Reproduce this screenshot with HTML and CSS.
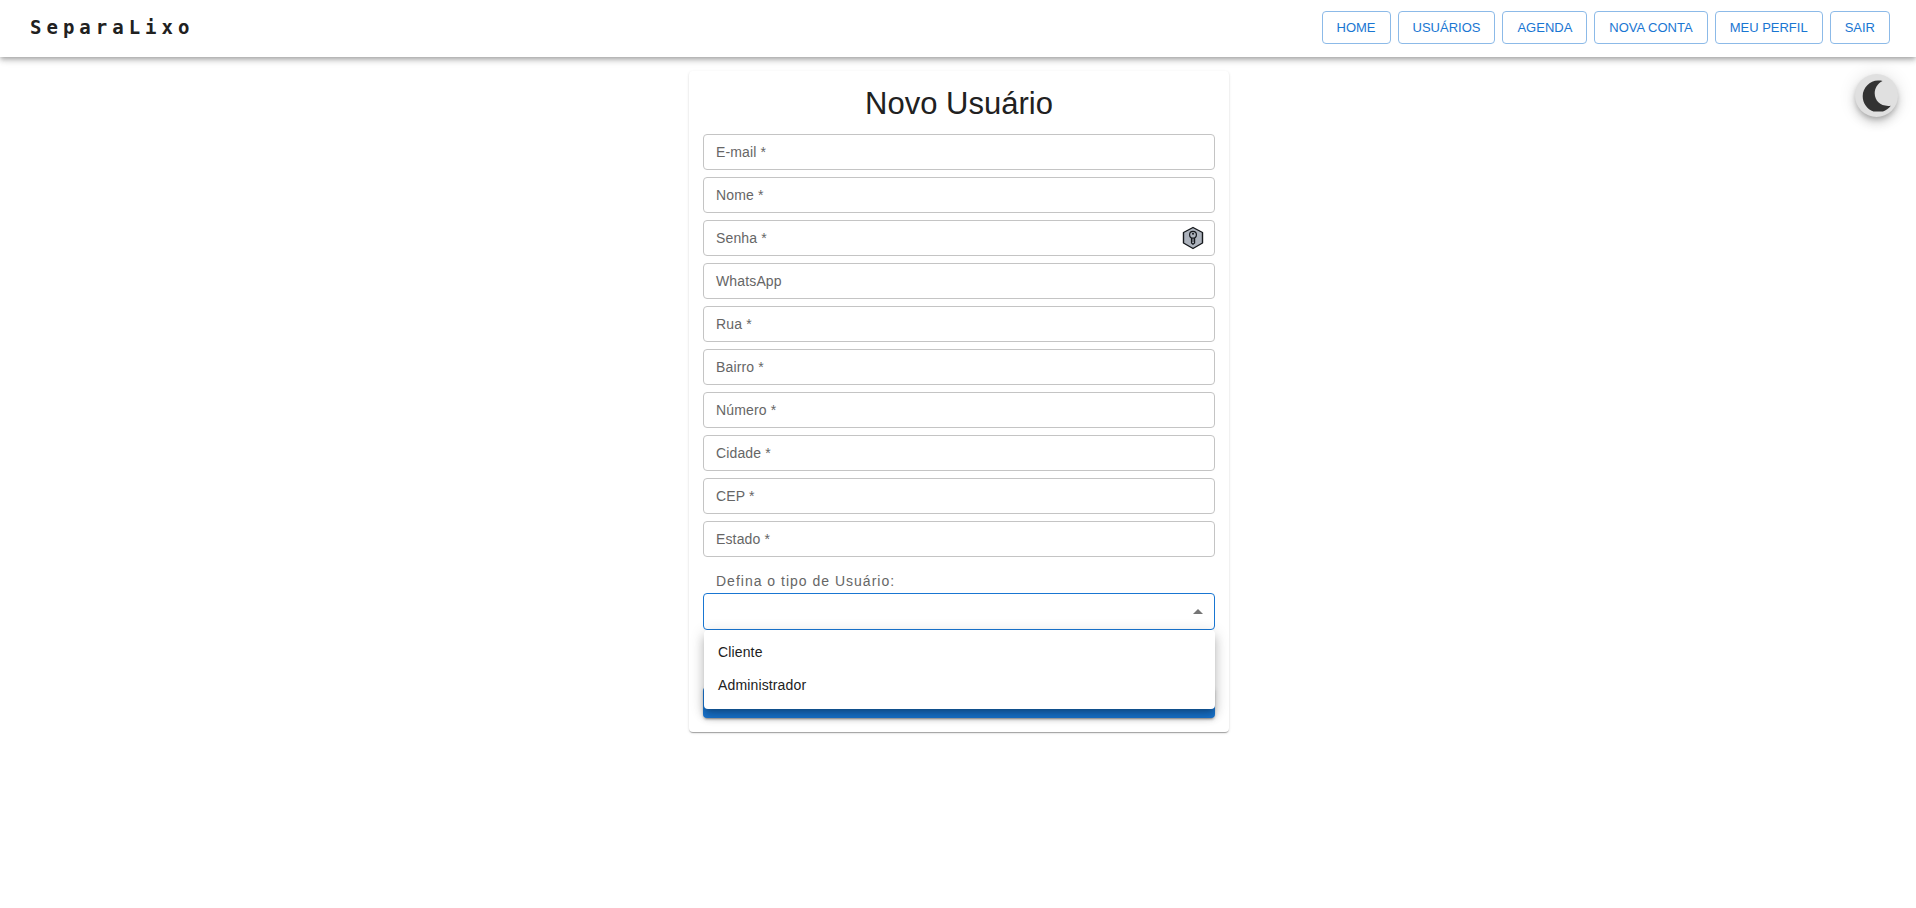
FILE: index.html
```html
<!DOCTYPE html>
<html lang="pt-BR">
<head>
  <meta charset="utf-8">
  <meta name="viewport" content="width=device-width, initial-scale=1">
  <title>SeparaLixo</title>
  <link rel="stylesheet" href="styles.css">
</head>
<body>
  <header class="topbar">
    <a class="brand" href="#">SeparaLixo</a>
    <nav class="nav">
      <a class="nav-link" href="#">HOME</a>
      <a class="nav-link" href="#">USUÁRIOS</a>
      <a class="nav-link" href="#">AGENDA</a>
      <a class="nav-link" href="#">NOVA CONTA</a>
      <a class="nav-link" href="#">MEU PERFIL</a>
      <a class="nav-link" href="#">SAIR</a>
    </nav>
  </header>

  <button class="theme-toggle" type="button" aria-label="Tema escuro">
    <svg width="30" height="32" viewBox="0 0 30 32" aria-hidden="true">
      <path fill="#333" d="M20.500 1C15.500 3.500 12.600 8.500 12.700 13.500C12.900 21 19 27 28.800 25.700C26.500 28.500 24 30.500 21 31.500H11.500C5 29.500.7 23 .7 16.300C.7 7.500 7.800.6 16 .5C18 .5 19.500.6 20.500 1Z"/>
    </svg>
  </button>

  <main class="page">
    <form class="card">
      <h1 class="title">Novo Usuário</h1>
      <div class="fields">
        <div class="field"><input class="input" id="email" type="email"><label class="label" for="email">E-mail *</label></div>
        <div class="field"><input class="input" id="nome" type="text"><label class="label" for="nome">Nome *</label></div>
        <div class="field">
          <input class="input" id="senha" type="password"><label class="label" for="senha">Senha *</label>
          <svg class="key" width="22" height="24" viewBox="0 0 22 24" aria-hidden="true">
            <path d="M11 1.500L20.500 6.500V17L11 22.500L1.500 17V6.500Z" fill="#adb3bd" stroke="#15181c" stroke-width="1.400" stroke-linejoin="round"/>
            <path d="M9.500 11.800V17L11 18.300L12.600 17V11.800" fill="#adb3bd" stroke="#15181c" stroke-width="1.200"/>
            <circle cx="11" cy="8.800" r="3.400" fill="#adb3bd" stroke="#15181c" stroke-width="1.200"/>
            <circle cx="11" cy="7.800" r="1" fill="#15181c"/>
            <path d="M11 12.500V16" stroke="#15181c" stroke-width=".8"/>
          </svg>
        </div>
        <div class="field"><input class="input" id="whatsapp" type="tel"><label class="label" for="whatsapp">WhatsApp</label></div>
        <div class="field"><input class="input" id="rua" type="text"><label class="label" for="rua">Rua *</label></div>
        <div class="field"><input class="input" id="bairro" type="text"><label class="label" for="bairro">Bairro *</label></div>
        <div class="field"><input class="input" id="numero" type="text"><label class="label" for="numero">Número *</label></div>
        <div class="field"><input class="input" id="cidade" type="text"><label class="label" for="cidade">Cidade *</label></div>
        <div class="field"><input class="input" id="cep" type="text"><label class="label" for="cep">CEP *</label></div>
        <div class="field"><input class="input" id="estado" type="text"><label class="label" for="estado">Estado *</label></div>
      </div>

      <label class="type-label" for="tipo">Defina o tipo de Usuário:</label>
      <div class="field select-field">
        <select class="input select" id="tipo">
          <option value=""></option>
          <option>Cliente</option>
          <option>Administrador</option>
        </select>
        <svg class="arrow" width="10" height="5" viewBox="0 0 10 5" aria-hidden="true"><path d="M0 5L5 0L10 5Z" fill="#757575"/></svg>
        <ul class="menu" role="listbox" aria-label="Tipo de usuário">
          <li class="menu-item" role="option">Cliente</li>
          <li class="menu-item" role="option">Administrador</li>
        </ul>
      </div>
      <button class="submit" type="submit" aria-label="Cadastrar"></button>
    </form>
  </main>
</body>
</html>
```
FILE: styles.css
```css
* {
  box-sizing: border-box;
}

body {
  margin: 0;
  background: #fff;
  color: #212121;
  font: 14px/20px "Liberation Sans", Arial, sans-serif;
}

.topbar {
  position: relative;
  display: flex;
  align-items: flex-start;
  justify-content: space-between;
  height: 57px;
  padding: 11px 26px 0 30px;
  background: #fff;
  box-shadow: 0 2px 4px -1px rgba(0, 0, 0, .2), 0 4px 5px rgba(0, 0, 0, .14), 0 1px 10px rgba(0, 0, 0, .12);
}

.brand {
  color: #212121;
  font: 700 19px/32px "DejaVu Sans Mono", monospace;
  letter-spacing: 5px;
  text-decoration: none;
}

.nav {
  display: flex;
  gap: 7px;
}

.nav-link {
  padding: 4px 14px;
  border: 1px solid #8cbae8;
  border-radius: 4px;
  color: #1976d2;
  font-size: 13px;
  line-height: 23px;
  text-decoration: none;
}

.theme-toggle {
  position: absolute;
  top: 74px;
  right: 18px;
  display: grid;
  place-items: center;
  width: 43px;
  height: 43px;
  padding: 0;
  border: 0;
  border-radius: 50%;
  background: #e0e0e0;
  box-shadow: 0 3px 5px -1px rgba(0, 0, 0, .2), 0 6px 10px rgba(0, 0, 0, .14), 0 1px 18px rgba(0, 0, 0, .12);
}

.page {
  padding: 14px 14px 14px 16px;
}

.card {
  max-width: 540px;
  margin: 0 auto;
  padding: 14px;
  border-radius: 4px;
  background: #fff;
  box-shadow: 0 2px 1px -1px rgba(0, 0, 0, .2), 0 1px 1px rgba(0, 0, 0, .14), 0 1px 3px rgba(0, 0, 0, .12);
}

.title {
  margin: 0 0 12px;
  font-size: 31px;
  font-weight: 400;
  line-height: 37px;
  text-align: center;
}

.fields {
  display: grid;
  gap: 7px;
}

.field {
  position: relative;
  display: grid;
  align-items: center;
}

.input,
.label,
.key,
.arrow {
  grid-area: 1 / 1;
}

.input {
  width: 100%;
  height: 36px;
  padding: 0 12px;
  border: 1px solid #c4c4c4;
  border-radius: 4px;
  background: #fff;
  color: inherit;
  font: inherit;
}

.label {
  justify-self: start;
  margin-left: 13px;
  color: #666;
  letter-spacing: .01em;
  pointer-events: none;
}

.key {
  justify-self: end;
  margin-right: 11px;
}

.type-label {
  display: block;
  margin-top: 14px;
  padding: 0 13px;
  color: #666;
  letter-spacing: 1px;
}

.select-field {
  margin-top: 2px;
}

.select {
  height: 37px;
  border-color: #1976d2;
  appearance: none;
}

.arrow {
  justify-self: end;
  margin-right: 12px;
  pointer-events: none;
}

.menu {
  position: absolute;
  top: 100%;
  left: 1px;
  right: 0;
  margin: 0;
  padding: 6px 0 7px;
  border-radius: 4px;
  background: #fff;
  box-shadow: 0 5px 5px -3px rgba(0, 0, 0, .2), 0 8px 10px 1px rgba(0, 0, 0, .14), 0 3px 14px 2px rgba(0, 0, 0, .12);
  list-style: none;
}

.menu-item {
  padding: 6px 14px;
  line-height: 21px;
  letter-spacing: .01em;
}

.submit {
  display: block;
  width: 100%;
  height: 31px;
  margin-top: 57px;
  border: 0;
  border-radius: 4px;
  background: #1976d2;
  box-shadow: 0 3px 1px -2px rgba(0, 0, 0, .2), 0 2px 2px rgba(0, 0, 0, .14), 0 1px 5px rgba(0, 0, 0, .12);
}
```
